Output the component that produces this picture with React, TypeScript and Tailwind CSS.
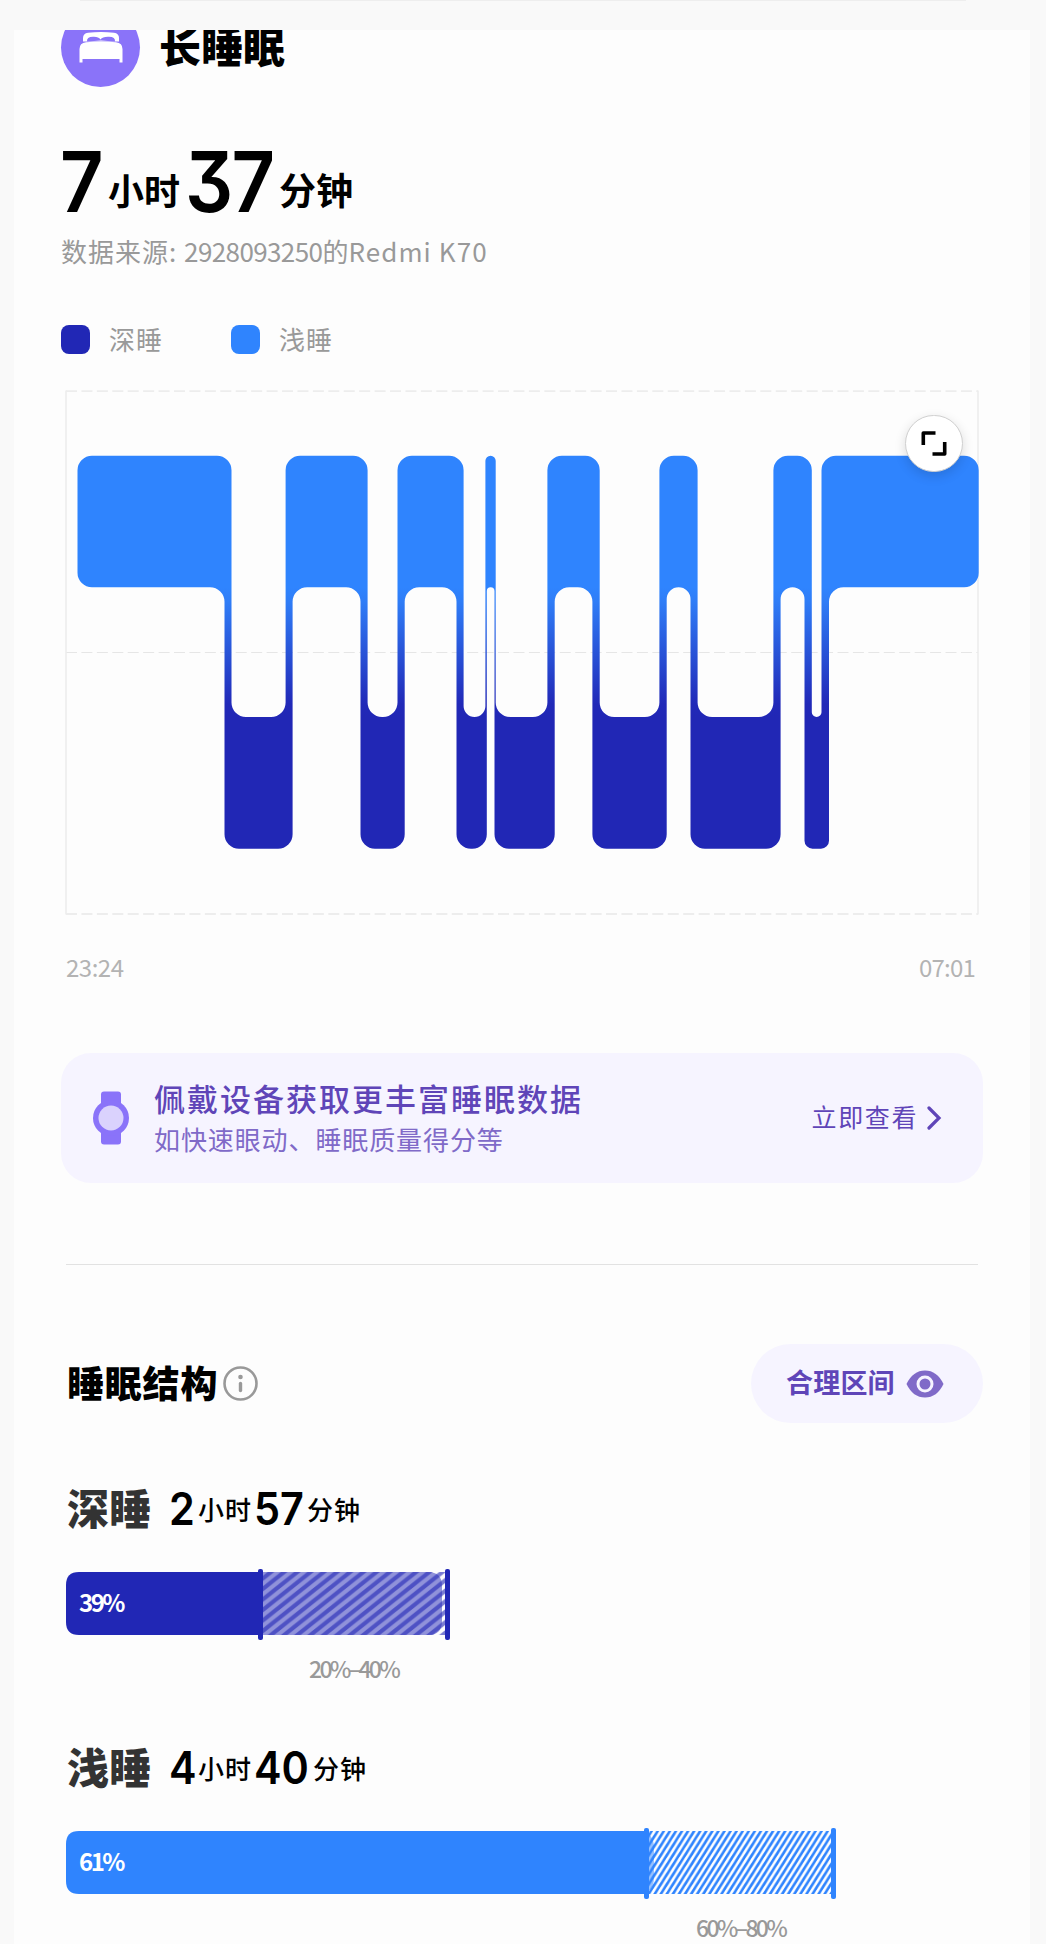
import React from 'react';

type Pt = [number, number, number?];

const LIGHT: [number, number][] = [
  [77.5, 231.5], [285.6, 367.6], [397.5, 463.6], [485.4, 495.7],
  [547.4, 599.7], [659.4, 697.6], [773.4, 811.8], [821.5, 978.7],
];
const DEEP: [number, number, number?][] = [
  [224.5, 292.6], [360.5, 404.7], [456.5, 486.8], [494.5, 554.7],
  [592.4, 666.7], [690.5, 780.6], [804.5, 829, 8],
];
const Y = { lightTop: 455.7, lightBottom: 587.2, deepTop: 717, deepBottom: 848.7 };

function outline(): Pt[] {
  const pts: Pt[] = [];
  LIGHT.forEach(([l, r], i) => {
    pts.push([l, Y.lightTop], [r, Y.lightTop]);
    if (i < DEEP.length) pts.push([r, Y.deepTop], [LIGHT[i + 1][0], Y.deepTop]);
  });
  pts.push([LIGHT[LIGHT.length - 1][1], Y.lightBottom]);
  for (let i = DEEP.length - 1; i >= 0; i--) {
    const [l, r, rad] = DEEP[i];
    pts.push([r, Y.lightBottom], [r, Y.deepBottom, rad], [l, Y.deepBottom, rad], [l, Y.lightBottom]);
  }
  pts.push([LIGHT[0][0], Y.lightBottom]);
  return pts;
}

function roundedPath(pts: Pt[], radius: number): string {
  const n = pts.length;
  let d = '';
  for (let i = 0; i < n; i++) {
    const p = pts[i];
    const a = pts[(i + n - 1) % n];
    const b = pts[(i + 1) % n];
    const la = Math.hypot(a[0] - p[0], a[1] - p[1]);
    const lb = Math.hypot(b[0] - p[0], b[1] - p[1]);
    const r = Math.min(p[2] ?? radius, la / 2, lb / 2);
    const s = [p[0] + ((a[0] - p[0]) / la) * r, p[1] + ((a[1] - p[1]) / la) * r];
    const e = [p[0] + ((b[0] - p[0]) / lb) * r, p[1] + ((b[1] - p[1]) / lb) * r];
    const cross = (p[0] - a[0]) * (b[1] - p[1]) - (p[1] - a[1]) * (b[0] - p[0]);
    d += `${i ? 'L' : 'M'}${s[0]} ${s[1]}A${r} ${r} 0 0 ${cross > 0 ? 1 : 0} ${e[0]} ${e[1]}`;
  }
  return d + 'Z';
}

function SleepChart() {
  return (
    <svg className="block" width="923" height="536" viewBox="61 384 923 536">
      <defs>
        <linearGradient id="stage" gradientUnits="userSpaceOnUse" x1="0" y1="587" x2="0" y2="717">
          <stop offset="0" stopColor="#2f84fe" />
          <stop offset="0.12" stopColor="#2f7cf6" />
          <stop offset="0.9" stopColor="#2129b8" />
          <stop offset="1" stopColor="#2127b5" />
        </linearGradient>
      </defs>
      <g stroke="#ededed" fill="none">
        <path d="M66 391.200H978M66 914H978" strokeWidth="1.8" strokeDasharray="11 4.43" />
        <path d="M66 652.500H978" stroke="#e6e6e6" strokeWidth="1" strokeDasharray="11 4.43" />
        <path d="M66 390.500V914.500M978 390.500V914.500" strokeWidth="1.6" />
      </g>
      <path d={roundedPath(outline(), 14.5)} fill="url(#stage)" />
    </svg>
  );
}

function BigDuration() {
  return (
    <div className="flex items-baseline font-bold text-black">
      <span className="-ml-px w-[48px] origin-left scale-x-[0.9] font-['Inter'] text-[84px] leading-[84px] font-semibold [font-feature-settings:'cv09']">7</span>
      <span className="relative -top-[7px] w-[77px] text-[36px] leading-[36px]">小时</span>
      <span className="w-[94px] origin-left scale-x-[0.9] font-['Inter'] text-[84px] leading-[84px] font-semibold tracking-[-2px] [font-feature-settings:'cv09']">37</span>
      <span className="relative -top-[7px] text-[37px] leading-[36px]">分钟</span>
    </div>
  );
}

function Duration({ h, m, end }: { h: string; m: string; end: string }) {
  return (
    <div className="flex items-baseline font-medium text-black">
      <span className="w-[29px] origin-left scale-x-[0.92] font-['Inter'] text-[45px] leading-[45px] font-semibold">{h}</span>
      <span className="relative -top-[5px] w-[56px] text-[26px] leading-[26px] tracking-[1px]">小时</span>
      <span className={`${end} origin-left scale-x-[0.92] font-['Inter'] text-[45px] leading-[45px] font-semibold`}>{m}</span>
      <span className="relative -top-[5px] text-[26px] leading-[26px] tracking-[1px]">分钟</span>
    </div>
  );
}

function Legend({ color, label }: { color: string; label: string }) {
  return (
    <div className="flex w-[170px] items-center">
      <div className={`size-[29px] rounded-lg ${color}`} />
      <span className="-mt-[2px] ml-[19px] text-[26px] leading-[30px] tracking-[1px] text-[#999]">{label}</span>
    </div>
  );
}

export default function App() {
  return (
    <div className="h-[1944px] w-[1046px] overflow-hidden bg-[#f9f9f9] font-['Noto_Sans_CJK_SC',sans-serif]">
      <div className="mx-auto h-[30px] w-[886px] border-t border-[#eeeeee]" />
      <div className="ml-[14px] h-[1914px] w-[1016px] overflow-hidden bg-[#fdfdfd] pl-[47px]">
        <div className="-mt-[22px] flex h-[79px] items-center">
          <div className="flex size-[79px] items-center justify-center rounded-full bg-[#8a73f9]">
            <svg width="44" height="40" viewBox="0 0 44 40" fill="#fff">
              <path d="M4 13.500V10Q4 5.500 9 4.800Q22 3 35 4.800Q40 5.500 40 10V13.500Z" />
              <path d="M8 13.500Q7.500 9 14 8.800Q19.500 8.500 21.500 11.500Q23.500 8.500 30 8.800Q36.500 9 36 13.500L22 12.500Z" fill="#8a73f9" />
              <path d="M0.500 34.500V21Q0.500 15 7 14.200Q22 12.600 37 14.200Q43.500 15 43.500 21V34.500H40.500V31H3.500V34.500Z" />
            </svg>
          </div>
          <h1 className="-mt-[5px] ml-[19px] text-[42px] leading-[42px] font-black text-black">长睡眠</h1>
        </div>

        <div className="mt-[53px] h-[86px]">
          <BigDuration />
        </div>
        <p className="mt-[7px] h-[36px] text-[26px] leading-[36px] whitespace-nowrap text-[#999]">
          <span className="tracking-[1px]">数据来源: </span>
          <span className="tracking-[-0.6px]">2928093250</span>的<span className="tracking-[1.100px]">Redmi K70</span>
        </p>

        <div className="mt-[56px] flex h-[29px] items-center">
          <Legend color="bg-[#2127b5]" label="深睡" />
          <Legend color="bg-[#2f84fe]" label="浅睡" />
        </div>

        <div className="relative mt-[30px] h-[536px] w-[923px]">
          <SleepChart />
          <button className="absolute top-[31px] left-[844px] flex h-[57px] w-[58px] items-center justify-center rounded-full border border-[#d0d0d0] bg-white shadow-[0_4px_12px_rgba(0,0,0,0.14)]">
            <svg width="26" height="25" viewBox="0 0 26 25" fill="none" stroke="#000" strokeWidth="3.6" strokeLinejoin="round">
              <path d="M2.300 14V2H14.500M11.500 23H23.700V11" />
            </svg>
          </button>
        </div>

        <div className="mt-[32px] flex h-[32px] w-[914px] items-center justify-between pl-[5px] text-[24px] text-[#b3b3b3]">
          <span className="-mt-[2px] tracking-[-0.500px]">23:24</span>
          <span className="-mt-[2px] tracking-[-0.800px]">07:01</span>
        </div>

        <div className="mt-[69px] flex h-[130px] w-[922px] items-center rounded-[30px] bg-[#f6f4ff] pl-[32px]">
          <svg width="36" height="54" viewBox="0 0 36 54">
            <rect x="8" y="0.5" width="20" height="53" rx="3" fill="#8a73f9" />
            <circle cx="18" cy="27" r="18" fill="#8a73f9" />
            <circle cx="18" cy="27" r="12.500" fill="#dad2fd" />
          </svg>
          <div className="-mt-[2px] ml-[25px]">
            <p className="text-[31px] leading-[42px] font-medium tracking-[2px] text-[#5f45b8]">佩戴设备获取更丰富睡眠数据</p>
            <p className="text-[26px] leading-[39px] tracking-[0.900px] text-[#806ac8]">如快速眼动、睡眠质量得分等</p>
          </div>
          <div className="ml-auto flex items-center pr-[41px] text-[#5f45b8]">
            <span className="-mt-[4px] text-[25px] leading-[36px] tracking-[1.6px]">立即查看</span>
            <svg className="-mt-px ml-[9px]" width="15" height="24" viewBox="0 0 15 24" fill="none" stroke="currentColor" strokeWidth="3.2" strokeLinecap="round">
              <path d="M2 2L12 12L2 22" />
            </svg>
          </div>
        </div>

        <div className="mt-[81px] ml-[5px] h-px w-[912px] bg-[#e2e2e2]" />

        <div className="mt-[79px] flex h-[79px] w-[922px] items-center justify-between">
          <div className="flex items-center pl-[6px]">
            <h2 className="-mt-[4px] text-[37px] leading-[44px] font-black tracking-[0.8px] text-black">睡眠结构</h2>
            <svg className="ml-[5px]" width="36" height="36" viewBox="0 0 36 36" fill="none" stroke="#999">
              <circle cx="17.500" cy="17.500" r="16" strokeWidth="2.6" />
              <path d="M17.500 17.500V24.500" strokeWidth="3.400" strokeLinecap="round" />
              <circle cx="17.500" cy="11" r="2.300" fill="#999" stroke="none" />
            </svg>
          </div>
          <div className="flex h-[79px] w-[232px] items-center rounded-full bg-[#f6f4ff] pl-[35px]">
            <span className="-mt-[3px] text-[27px] leading-[36px] font-bold tracking-[0.200px] text-[#5f45b8]">合理区间</span>
            <svg className="ml-[11px]" width="38" height="28" viewBox="0 0 38 28">
              <path d="M0.500 14Q7 0.500 19 0.500T37.500 14Q31 27.500 19 27.500T0.500 14Z" fill="#806ac8" />
              <circle cx="19" cy="14" r="7" fill="none" stroke="#f6f4ff" strokeWidth="3" />
            </svg>
          </div>
        </div>

        <section className="mt-[54px] h-[203px]">
          <div className="flex h-[62px] items-center pl-[6px]">
            <h3 className="-mt-[3px] w-[102px] text-[42px] leading-[50px] font-black text-[#333]">深睡</h3>
            <Duration h="2" m="57" end="w-[53px]" />
          </div>
          <DeepBar />
        </section>
        <section className="mt-[56px] h-[210px]">
          <div className="flex h-[62px] items-center pl-[6px]">
            <h3 className="-mt-[3px] w-[102px] text-[42px] leading-[50px] font-black text-[#333]">浅睡</h3>
            <Duration h="4" m="40" end="w-[59px]" />
          </div>
          <LightBar />
        </section>
      </div>
    </div>
  );
}

function DeepBar() {
  return (
    <div className="mt-[28px] ml-[5px]">
      <div className="relative h-[75px] w-[400px]">
        <svg className="block" width="400" height="75" viewBox="0 0 400 75">
          <defs>
            <pattern id="deepHatch" width="13.200" height="10.500" patternUnits="userSpaceOnUse">
              <path d="M-13.200 21L26.400 -10.500M-13.200 10.500L13.200 -10.500M0 21L26.400 0" stroke="#2127b5" strokeOpacity="0.600" strokeWidth="4.200" />
            </pattern>
          </defs>
          <path d="M197 5H362Q376 5 376 19V54Q376 68 362 68H197Z" fill="#9092da" />
          <rect x="197" y="5" width="184" height="63" fill="url(#deepHatch)" />
          <path d="M13 5H195V68H13Q0 68 0 55V18Q0 5 13 5Z" fill="#2127b5" />
          <rect x="192" y="2" width="5" height="71" rx="2" fill="#2127b5" />
          <rect x="379" y="2" width="5" height="71" rx="2" fill="#2127b5" />
        </svg>
        <span className="absolute top-[20px] left-[13px] text-[24px] leading-[30px] font-bold tracking-[-2.5px] text-white">39%</span>
      </div>
      <p className="mt-[4px] ml-[243px] text-[23px] leading-[44px] font-medium tracking-[-2.7px] text-[#999]">20%–40%</p>
    </div>
  );
}

function LightBar() {
  return (
    <div className="mt-[28px] ml-[5px]">
      <div className="relative h-[75px] w-[800px]">
        <svg className="block" width="800" height="75" viewBox="0 0 800 75">
          <defs>
            <pattern id="lightHatch" width="6.070" height="9.700" patternUnits="userSpaceOnUse">
              <path d="M-6.070 19.400L12.140 -9.700M-6.070 9.700L6.070 -9.700M0 19.400L12.140 0" stroke="#2f84fe" strokeWidth="2.700" />
            </pattern>
          </defs>
          <rect x="583" y="5" width="184" height="63" fill="#fff" />
          <path d="M582 7Q588 13 588 21V52Q588 60 582 66Z" fill="#97c1fe" />
          <rect x="583" y="5" width="184" height="63" fill="url(#lightHatch)" />
          <path d="M13 5H580V68H13Q0 68 0 55V18Q0 5 13 5Z" fill="#2f84fe" />
          <rect x="578" y="2" width="5" height="71" rx="2" fill="#2f84fe" />
          <rect x="765" y="2" width="5" height="71" rx="2" fill="#2f84fe" />
        </svg>
        <span className="absolute top-[20px] left-[13px] text-[24px] leading-[30px] font-bold tracking-[-2.5px] text-white">61%</span>
      </div>
      <p className="mt-[4px] ml-[630px] text-[23px] leading-[44px] font-medium tracking-[-2.7px] text-[#999]">60%–80%</p>
    </div>
  );
}
